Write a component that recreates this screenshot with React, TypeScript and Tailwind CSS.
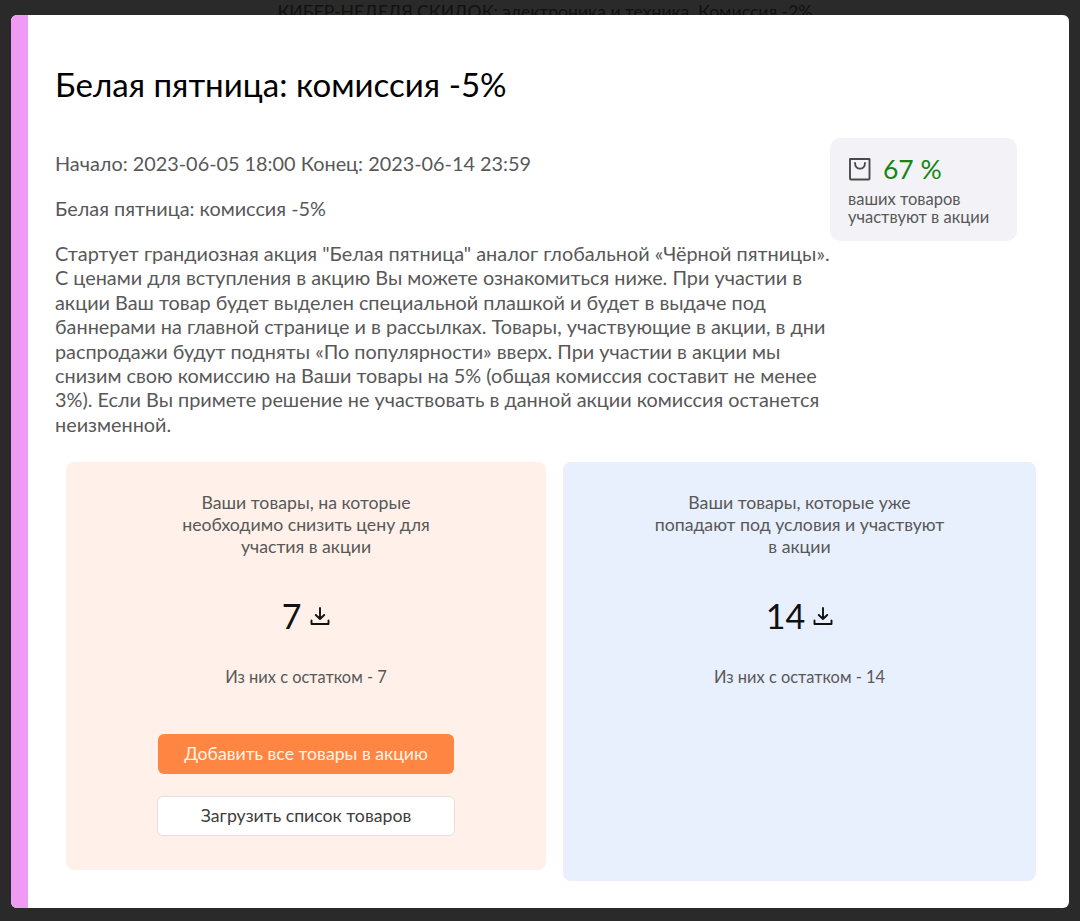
const DownloadIcon = () => (
  <svg width="20" height="20" viewBox="0 0 20 20" fill="none" stroke="#111" strokeWidth="1.9" strokeLinecap="round" strokeLinejoin="round">
    <path d="M10 2v11M5.8 9 10 13l4.2-4M1.5 14.5v3.5h17v-3.5" />
  </svg>
);

const BagIcon = () => (
  <svg width="24" height="24" viewBox="0 0 24 24" fill="none" stroke="#4a4a4a" strokeWidth="1.9" strokeLinejoin="round" strokeLinecap="round">
    <path d="M2 2h19.5v19.7a.8.8 0 0 1-.8.8H3a1 1 0 0 1-1-1z" />
    <path d="M7 6c0 7.5 10 7.5 10 0" />
  </svg>
);

export default function App() {
  return (
    <div className="relative h-[921px] w-[1080px] overflow-hidden bg-[#2a2a2a] pl-[11px] pt-[15px] font-['Lato',sans-serif] text-[#585858]">
      <div className="absolute left-0 right-0 top-[1px] pl-[10px] text-center text-[17.6px] leading-[22px] text-[#111]">
        КИБЕР-НЕДЕЛЯ СКИДОК: электроника и техника. Комиссия -2%
      </div>

      <div className="relative flex h-[893px] w-[1058px] overflow-hidden rounded-[6px] bg-white">
        <div className="w-[17px] shrink-0 bg-[#ef9bf5]" />
        <div className="flex-1 pl-[28px] pt-[47px]">
          <h1 className="-ml-px text-[33.1px] font-normal leading-[44px] text-black">Белая пятница: комиссия -5%</h1>

          <div className="-ml-px mt-[45px] flex">
            <div className="w-[775px] shrink-0 text-[19.85px] leading-[24.4px]">
              <p>Начало: 2023-06-05 18:00 Конец: 2023-06-14 23:59</p>
              <p className="mt-[20.6px]">Белая пятница: комиссия -5%</p>
              <p className="mt-[20.6px]">
                Стартует грандиозная акция "Белая пятница" аналог глобальной «Чёрной пятницы». С ценами для вступления в акцию Вы можете ознакомиться ниже. При участии в акции Ваш товар будет выделен специальной плашкой и будет в выдаче под баннерами на главной странице и в рассылках. Товары, участвующие в акции, в дни распродажи будут подняты «По популярности» вверх. При участии в акции мы снизим свою комиссию на Ваши товары на 5% (общая комиссия составит не менее 3%). Если Вы примете решение не участвовать в данной акции комиссия останется неизменной.
              </p>
            </div>
            <div className="-mt-[13px] h-[103px] w-[187px] shrink-0 self-start rounded-[10px] bg-[#f3f3f7] pl-[18px] pt-[17px]">
              <div className="flex items-center gap-[11px]">
                <BagIcon />
                <span className="text-[26.5px] leading-[28px] text-[#148614]">67 %</span>
              </div>
              <p className="mt-[7px] text-[16.5px] leading-[18px]">
                ваших товаров
                <br />
                участвуют в акции
              </p>
            </div>
          </div>

          <div className="ml-[10px] mt-[26px] flex items-start gap-[17px]">
            <div className="flex h-[408px] w-[480px] flex-col items-center rounded-[8px] bg-[#fff1e9] pt-[30px]">
              <p className="w-[270px] text-center text-[17.7px] leading-[22px]">
                Ваши товары, на которые необходимо снизить цену для участия в акции
              </p>
              <div className="mt-[36px] flex items-center gap-[9px]">
                <span className="text-[34px] leading-[44px] text-[#111]">7</span>
                <DownloadIcon />
              </div>
              <p className="mt-[28px] text-[16.4px] leading-[22px]">Из них с остатком - 7</p>
              <button className="mt-[46px] h-[40px] w-[296px] rounded-[6px] bg-[#ff8642] text-[17.7px] text-[#fff4e8]">
                Добавить все товары в акцию
              </button>
              <button className="mt-[22px] h-[40px] w-[298px] rounded-[6px] border border-[#e4dedc] bg-white text-[17.7px] text-[#3c3c3c]">
                Загрузить список товаров
              </button>
            </div>

            <div className="flex h-[419px] w-[473px] flex-col items-center rounded-[8px] bg-[#e8effd] pt-[30px]">
              <p className="w-[300px] text-center text-[17.7px] leading-[22px]">
                Ваши товары, которые уже попадают под условия и участвуют в акции
              </p>
              <div className="mt-[36px] flex items-center gap-[8px]">
                <span className="text-[34px] leading-[44px] text-[#111]">14</span>
                <DownloadIcon />
              </div>
              <p className="mt-[28px] text-[16.4px] leading-[22px]">Из них с остатком - 14</p>
            </div>
          </div>
        </div>
      </div>
    </div>
  );
}
